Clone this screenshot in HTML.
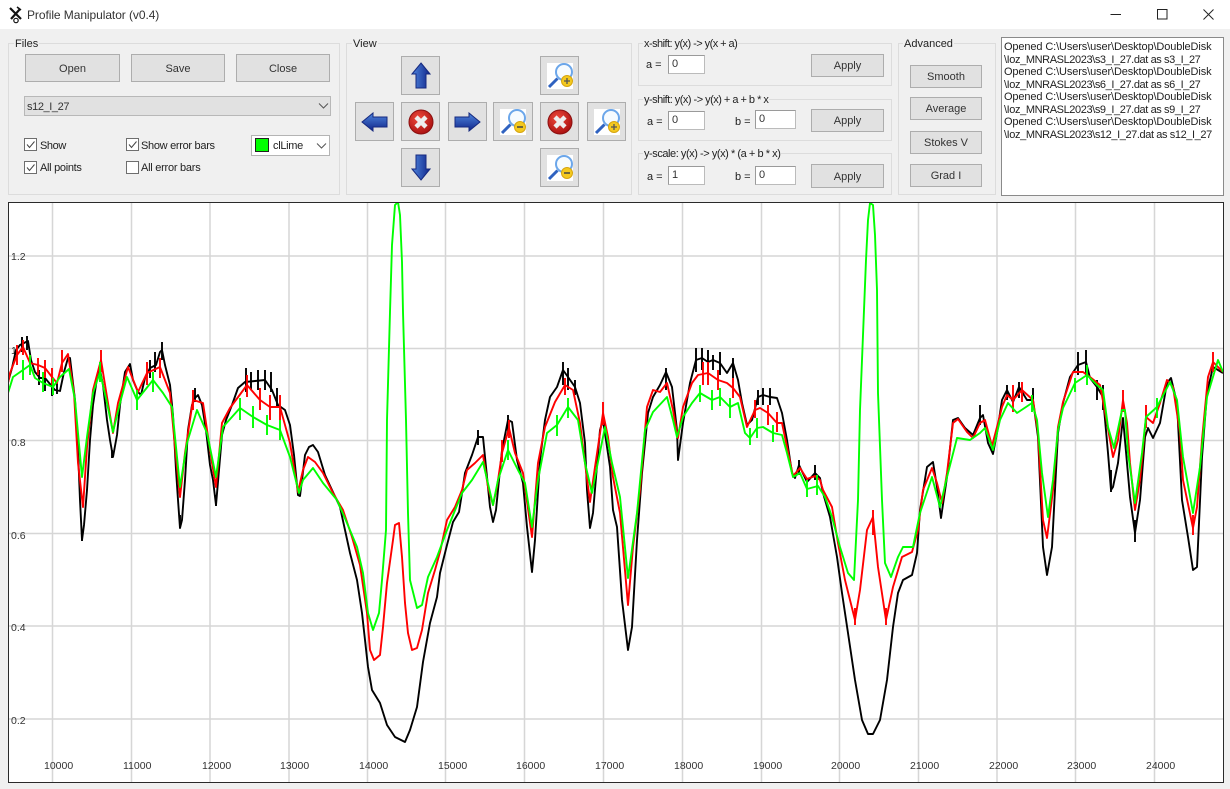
<!DOCTYPE html>
<html><head><meta charset="utf-8"><title>Profile Manipulator (v0.4)</title>
<style>
html,body{margin:0;padding:0;width:1230px;height:789px;overflow:hidden;background:#f0f0f0;font-family:"Liberation Sans",sans-serif;font-size:11px;color:#222}
body{filter:blur(.3px)}
div,svg.a{position:absolute;box-sizing:border-box}
.t{white-space:nowrap;line-height:14px;height:14px}
.g{border:1px solid #dcdcdc}
.l{background:#f0f0f0;padding:0 1px;white-space:nowrap;line-height:13px;height:13px}
.b{background:#e1e1e1;border:1px solid #adadad;border-width:1px 1.5px 1.5px 1px;text-align:center;color:#333}
.i{background:#fff;border:1px solid #8f8f8f;border-color:#9a9a9a #bbb #bbb #9a9a9a;padding:0 0 0 3px;line-height:16px;color:#333}
.c{background:#fff;border:1px solid #6e6e6e;width:13px;height:13px}
.m1{letter-spacing:-.12px}.m2{letter-spacing:-.4px}
</style></head><body>
<div style="left:0;top:0;width:1230px;height:29px;background:#fff"></div>
<svg class="a" style="left:8px;top:6px" width="16" height="18" viewBox="0 0 16 18"><path d="M2 2L13 13M12 3L3 13" stroke="#111" stroke-width="2.2" fill="none"/><path d="M9 1L13 4" stroke="#111" stroke-width="1.6"/><circle cx="8" cy="14.5" r="2.2" fill="#fff" stroke="#111" stroke-width="1.2"/></svg>
<div class="t" style="left:27px;top:8px;font-size:12px;color:#333;letter-spacing:-.07px">Profile Manipulator (v0.4)</div>
<svg class="a" style="left:1100px;top:0" width="130" height="29"><path d="M10.5 14.5H21" stroke="#222" stroke-width="1"/><rect x="57.5" y="9.5" width="9.5" height="9.5" fill="none" stroke="#222"/><path d="M103.5 9.5L113.500 19.500M113.500 9.500L103.500 19.500" stroke="#222" fill="none"/></svg>

<div class="g" style="left:8px;top:43px;width:332px;height:152px"></div>
<div class="l" style="left:14px;top:38px">Files</div>
<div class="b" style="left:25px;top:54px;width:95px;height:28px;line-height:28px">Open</div>
<div class="b" style="left:131px;top:54px;width:94px;height:28px;line-height:28px">Save</div>
<div class="b" style="left:236px;top:54px;width:94px;height:28px;line-height:28px">Close</div>
<div class="b" style="left:24px;top:96px;width:307px;height:20px;line-height:20px;text-align:left;padding-left:2px;border-color:#b8b8b8;letter-spacing:-.4px">s12_I_27</div>
<svg class="a" style="left:318px;top:102px" width="11" height="8"><path d="M1 1.500L5.500 6L10 1.500" fill="none" stroke="#555"/></svg>
<div class="c" style="left:24px;top:138px"></div><svg class="a" style="left:24px;top:138px" width="13" height="13"><path d="M3 6.500L5.500 9.500L10.500 3.500" fill="none" stroke="#444"/></svg>
<div class="t" style="left:40px;top:139px;letter-spacing:-.4px">Show</div>
<div class="c" style="left:126px;top:138px"></div><svg class="a" style="left:126px;top:138px" width="13" height="13"><path d="M3 6.500L5.500 9.500L10.500 3.500" fill="none" stroke="#444"/></svg>
<div class="t" style="left:141px;top:139px;letter-spacing:-.3px">Show error bars</div>
<div class="c" style="left:24px;top:161px"></div><svg class="a" style="left:24px;top:161px" width="13" height="13"><path d="M3 6.500L5.500 9.500L10.500 3.500" fill="none" stroke="#444"/></svg>
<div class="t" style="left:40px;top:161px;letter-spacing:-.3px">All points</div>
<div class="c" style="left:126px;top:161px"></div>
<div class="t" style="left:141px;top:161px;letter-spacing:-.25px">All error bars</div>
<div style="left:251px;top:135px;width:79px;height:21px;background:#fff;border:1px solid #b4b4b4"></div>
<div style="left:255px;top:138px;width:14px;height:14px;background:#0f0;border:1px solid #222"></div>
<div class="t" style="left:273px;top:139px;letter-spacing:-.3px">clLime</div>
<svg class="a" style="left:316px;top:142px" width="11" height="8"><path d="M1 1.500L5.500 6L10 1.500" fill="none" stroke="#555"/></svg>

<div class="g" style="left:346px;top:43px;width:286px;height:152px"></div>
<div class="l" style="left:352px;top:38px">View</div>
<svg width="0" height="0" style="position:absolute"><defs>
<linearGradient id="gh" x1="0" y1="0" x2="0" y2="1"><stop offset="0" stop-color="#4f86de"/><stop offset="1" stop-color="#10258a"/></linearGradient>
<linearGradient id="gv" x1="0" y1="0" x2="1" y2="0"><stop offset="0" stop-color="#4f86de"/><stop offset="1" stop-color="#10258a"/></linearGradient>
<radialGradient id="gr" cx=".4" cy=".35" r=".7"><stop offset="0" stop-color="#ee4a3c"/><stop offset="1" stop-color="#a80f0f"/></radialGradient>
<symbol id="x" viewBox="0 0 26 26"><circle cx="13" cy="13" r="12" fill="url(#gr)" stroke="#8a1010"/><path d="M8 8L18 18M18 8L8 18" stroke="#eee" stroke-width="4.500"/></symbol>
<symbol id="zp" viewBox="0 0 26 26"><rect width="26" height="26" fill="#fff"/><circle cx="17" cy="9" r="8" fill="#f6fbff" stroke="#6ba6ea" stroke-width="2"/><path d="M10.500 15.500L2 24" stroke="#2f62c0" stroke-width="3"/><circle cx="20" cy="18" r="5.500" fill="#f4c91e" stroke="#d6a510"/><path d="M17 18H23M20 15V21" stroke="#555" stroke-width="1.300"/></symbol>
<symbol id="zm" viewBox="0 0 26 26"><rect width="26" height="26" fill="#fff"/><circle cx="17" cy="9" r="8" fill="#f6fbff" stroke="#6ba6ea" stroke-width="2"/><path d="M10.500 15.500L2 24" stroke="#2f62c0" stroke-width="3"/><circle cx="20" cy="18" r="5.500" fill="#f4c91e" stroke="#d6a510"/><path d="M17 18H23" stroke="#444" stroke-width="1.500"/></symbol>
</defs></svg>
<div class="b" style="left:401px;top:56px;width:39px;height:39px"></div>
<svg class="a" style="left:411px;top:62px" width="20" height="27"><path d="M10 1L19 12H15V26H5V12H1Z" fill="url(#gv)" stroke="#16297f"/></svg>
<div class="b" style="left:355px;top:102px;width:39px;height:39px"></div>
<svg class="a" style="left:361px;top:112px" width="27" height="20"><path d="M1 10L12 1V5H26V15H12V19Z" fill="url(#gh)" stroke="#16297f"/></svg>
<div class="b" style="left:401px;top:102px;width:39px;height:39px"></div>
<svg class="a" style="left:408px;top:109px" width="26" height="26"><use href="#x"/></svg>
<div class="b" style="left:448px;top:102px;width:39px;height:39px"></div>
<svg class="a" style="left:454px;top:112px" width="27" height="20"><path d="M26 10L15 1V5H1V15H15V19Z" fill="url(#gh)" stroke="#16297f"/></svg>
<div class="b" style="left:401px;top:148px;width:39px;height:39px"></div>
<svg class="a" style="left:411px;top:154px" width="20" height="27"><path d="M10 26L19 15H15V1H5V15H1Z" fill="url(#gv)" stroke="#16297f"/></svg>
<div class="b" style="left:493px;top:102px;width:40px;height:39px"></div>
<svg class="a" style="left:500px;top:109px" width="26" height="26"><use href="#zm"/></svg>
<div class="b" style="left:540px;top:102px;width:39px;height:39px"></div>
<svg class="a" style="left:547px;top:109px" width="26" height="26"><use href="#x"/></svg>
<div class="b" style="left:587px;top:102px;width:39px;height:39px"></div>
<svg class="a" style="left:594px;top:109px" width="26" height="26"><use href="#zp"/></svg>
<div class="b" style="left:540px;top:56px;width:39px;height:39px"></div>
<svg class="a" style="left:547px;top:63px" width="26" height="26"><use href="#zp"/></svg>
<div class="b" style="left:540px;top:148px;width:39px;height:39px"></div>
<svg class="a" style="left:547px;top:155px" width="26" height="26"><use href="#zm"/></svg>

<div class="g" style="left:638px;top:43px;width:254px;height:43px"></div>
<div class="l" style="left:643px;top:38px;letter-spacing:-.55px">x-shift: y(x) -&gt; y(x + a)</div>
<div class="t" style="left:646px;top:58px">a =</div>
<div class="i" style="left:668px;top:55px;width:37px;height:19px">0</div>
<div class="b" style="left:811px;top:54px;width:73px;height:23px;line-height:23px">Apply</div>
<div class="g" style="left:638px;top:99px;width:254px;height:42px"></div>
<div class="l" style="left:643px;top:94px;letter-spacing:-.52px">y-shift: y(x) -&gt; y(x) + a + b * x</div>
<div class="t" style="left:647px;top:115px">a =</div>
<div class="i" style="left:668px;top:111px;width:37px;height:19px">0</div>
<div class="t" style="left:735px;top:115px">b =</div>
<div class="i" style="left:755px;top:110px;width:41px;height:19px">0</div>
<div class="b" style="left:811px;top:109px;width:73px;height:23px;line-height:23px">Apply</div>
<div class="g" style="left:638px;top:153px;width:254px;height:42px"></div>
<div class="l" style="left:643px;top:148px;letter-spacing:-.45px">y-scale: y(x) -&gt; y(x) * (a + b * x)</div>
<div class="t" style="left:647px;top:170px">a =</div>
<div class="i" style="left:668px;top:166px;width:37px;height:19px">1</div>
<div class="t" style="left:735px;top:170px">b =</div>
<div class="i" style="left:755px;top:166px;width:41px;height:19px">0</div>
<div class="b" style="left:811px;top:164px;width:73px;height:24px;line-height:24px">Apply</div>

<div class="g" style="left:898px;top:43px;width:98px;height:152px"></div>
<div class="l" style="left:903px;top:38px">Advanced</div>
<div class="b" style="left:910px;top:65px;width:72px;height:23px;line-height:23px">Smooth</div>
<div class="b" style="left:910px;top:97px;width:72px;height:23px;line-height:23px">Average</div>
<div class="b" style="left:910px;top:131px;width:72px;height:23px;line-height:23px">Stokes V</div>
<div class="b" style="left:910px;top:164px;width:72px;height:23px;line-height:23px">Grad I</div>

<div style="left:1001px;top:37px;width:223px;height:159px;background:#fff;border:1px solid #8a8a8a"></div>
<div class="t m1" style="left:1004px;top:40px">Opened C:\Users\user\Desktop\DoubleDisk</div>
<div class="t m2" style="left:1004px;top:53px">\Ioz_MNRASL2023\s3_I_27.dat as s3_I_27</div>
<div class="t m1" style="left:1004px;top:65px">Opened C:\Users\user\Desktop\DoubleDisk</div>
<div class="t m2" style="left:1004px;top:78px">\Ioz_MNRASL2023\s6_I_27.dat as s6_I_27</div>
<div class="t m1" style="left:1004px;top:90px">Opened C:\Users\user\Desktop\DoubleDisk</div>
<div class="t m2" style="left:1004px;top:103px">\Ioz_MNRASL2023\s9_I_27.dat as s9_I_27</div>
<div class="t m1" style="left:1004px;top:115px">Opened C:\Users\user\Desktop\DoubleDisk</div>
<div class="t m2" style="left:1004px;top:128px">\Ioz_MNRASL2023\s12_I_27.dat as s12_I_27</div>

<svg class="a" style="left:0;top:0" width="1230" height="789" viewBox="0 0 1230 789">
<defs><clipPath id="cp"><rect x="9" y="203" width="1214" height="579"/></clipPath></defs>
<rect x="8.500" y="202.500" width="1215" height="580" fill="#fff" stroke="#2a2a2a"/>
<g stroke="#d6d6d6" stroke-width="1.500" fill="none">
<path d="M52.500 203V782M131.500 203V782M210 203V782M289 203V782M367.500 203V782M445.500 203V782M524.500 203V782M603.500 203V782M682.500 203V782M761.500 203V782M839.500 203V782M918.500 203V782M997 203V782M1075.500 203V782M1154.500 203V782"/>
<path d="M9 256H1223M9 348.500H1223M9 440.500H1223M9 533.500H1223M9 626H1223M9 719H1223"/>
</g>
<g font-family="'Liberation Sans',sans-serif" font-size="10.500" fill="#333">
<text x="11" y="260">1.2</text><text x="11" y="354">1</text><text x="11" y="446">0.8</text><text x="11" y="539">0.6</text><text x="11" y="631">0.4</text><text x="11" y="724">0.2</text>
<text x="44" y="769">10000</text><text x="123" y="769">11000</text><text x="202" y="769">12000</text><text x="280" y="769">13000</text><text x="359" y="769">14000</text><text x="438" y="769">15000</text><text x="516" y="769">16000</text><text x="595" y="769">17000</text><text x="674" y="769">18000</text><text x="753" y="769">19000</text><text x="831" y="769">20000</text><text x="910" y="769">21000</text><text x="989" y="769">22000</text><text x="1067" y="769">23000</text><text x="1146" y="769">24000</text>
</g>
<g clip-path="url(#cp)" fill="none" stroke-width="1.900" stroke-linejoin="round">
<g stroke="#000">
<path d="M8 382L12 368L16 350L20 345L24 343L28 341L31 360L35 372L40 378L45 378L50 384L55 390L60 391L64 372L68 358L70 358L72 375L75 400L78 450L80 500L82 540L84 525L87 490L90 440L93 405L97 378L100 370L103 385L107 420L110 440L113 457L117 435L120 405L125 372L130 364L133 380L138 392L141 395L145 378L150 368L156 365L160 352L162 350L165 365L170 385L173 415L176 470L178 500L180 528L182 520L185 480L188 430L192 405L195 398L198 395L202 405L206 430L210 465L213 480L216 505L219 470L222 435L226 420L232 405L238 388L245 382L255 381L265 380L272 390L278 405L285 410L290 425L294 455L298 495L300 496L302 480L305 455L309 447L313 445L318 452L325 475L332 490L340 507L350 553L357 580L362 613L368 667L372 690L380 703L387 725L395 737L405 742L410 730L417 707L423 662L430 623L437 597L440 573L447 545L453 522L459 512L462 493L465 473L472 455L478 437L483 437L485 457L490 507L493 522L496 510L502 450L508 420L512 422L517 460L523 483L527 527L532 572L535 540L540 460L545 420L550 397L557 387L563 370L568 377L575 387L580 403L585 443L587 490L590 528L593 513L600 430L603 420L610 467L613 510L617 527L622 600L628 650L632 627L637 540L642 473L648 413L653 397L660 385L666 372L672 387L677 430L678 460L683 423L690 383L696 360L702 358L708 362L713 360L720 363L727 373L733 363L738 380L742 403L747 425L752 420L758 397L763 395L770 397L777 398L782 413L787 440L792 473L795 478L799 465L807 482L815 473L820 478L823 493L830 517L837 557L842 593L848 633L855 680L862 720L868 734L873 734L880 720L887 680L893 627L898 593L903 580L912 575L917 553L920 510L927 467L933 462L937 487L941 518L947 477L953 420L958 418L965 428L973 435L980 418L983 415L988 443L993 454L997 433L1002 400L1007 390L1013 402L1019 387L1027 400L1033 400L1038 437L1043 547L1047 575L1052 547L1058 433L1063 403L1070 377L1078 365L1086 362L1090 378L1097 387L1103 397L1108 453L1111 490L1113 487L1118 463L1123 418L1127 463L1130 497L1135 533L1140 500L1145 437L1148 428L1153 438L1160 423L1167 383L1171 378L1177 403L1182 500L1188 537L1193 570L1197 567L1202 457L1207 393L1213 367L1223 373"/>
<path d="M22 337V352M27 336V350M39 370V385M45 372V391M52 378V396M57 383V394M150 360V378M155 352V372M162 342V360M112 450V458M246 368V392M251 372V390M258 370V390M265 370V390M271 372V392M277 388V408M195 388V402M82 530V541M216 495V506M180 515V528M696 348V372M702 348V370M708 350V372M713 355V370M720 352V375M733 358V378M758 390V405M763 388V405M770 388V405M799 460V475M815 465V480M1078 352V375M1086 350V375M1097 380V400M1103 385V410M1111 470V492M1135 520V542M1007 385V400M1019 382V398M1033 388V405M980 405V425M563 362V385M568 368V390M575 380V395M508 415V432M478 430V445M666 368V390"/>
</g>
<g stroke="#f00">
<path d="M8 383L10 373L17 355L23 347L30 363L38 365L45 368L52 377L57 383L62 363L68 354L74 393L78 463L83 507L87 447L93 390L101 360L107 397L113 433L118 403L128 367L138 392L147 373L160 367L170 393L175 447L180 497L185 453L193 400L203 403L212 463L216 487L222 423L230 408L247 385L260 400L270 407L280 407L290 443L298 492L303 470L308 457L315 462L323 473L333 493L343 510L352 537L360 565L367 613L370 650L374 660L380 655L383 627L387 583L393 540L395 525L399 523L402 557L405 603L408 633L412 650L417 648L422 630L428 593L435 570L440 552L447 520L455 507L462 490L467 470L475 463L483 455L488 487L493 505L497 487L502 453L509 428L515 453L523 473L532 537L538 463L545 427L555 402L565 385L573 390L580 423L585 463L590 502L595 467L603 413L608 437L613 477L620 513L628 605L633 547L640 490L647 407L653 390L660 392L667 383L673 410L678 438L683 407L692 383L698 375L708 373L718 380L727 383L733 388L740 397L747 427L755 410L760 408L768 413L777 423L782 423L787 447L793 476L800 468L807 479L815 476L820 480L823 490L832 507L838 543L845 580L855 620L860 590L867 530L873 517L878 567L886 620L893 587L902 557L912 552L918 530L923 490L932 468L937 483L942 503L947 473L953 423L958 419L967 432L973 438L980 423L985 420L992 446L997 427L1002 407L1007 395L1013 400L1022 390L1033 400L1038 433L1043 520L1047 538L1053 490L1058 427L1063 402L1073 372L1083 372L1090 377L1100 385L1107 423L1113 457L1118 440L1123 400L1127 423L1130 463L1135 510L1140 480L1146 417L1153 423L1160 403L1167 380L1173 387L1180 433L1183 480L1193 528L1197 507L1202 440L1208 377L1213 362L1223 372"/>
<path d="M17 345V365M23 340V355M30 355V372M38 358V375M45 360V378M52 368V385M62 350V372M101 350V372M147 362V385M160 358V378M193 390V410M247 375V397M260 388V410M270 395V420M280 395V420M565 378V395M502 440V462M509 420V438M603 402V425M703 362V385M708 362V385M718 370V390M733 378V398M755 400V418M768 405V425M777 412V432M1013 385V412M1022 382V402M1123 390V412M1193 515V535M1213 352V372M873 510V535M855 608V625M886 608V625M1146 405V428"/>
</g>
<g stroke="#0f0">
<path d="M8 393L13 377L23 370L30 365L35 378L43 383L53 387L60 377L69 369L75 400L82 477L87 437L93 393L100 372L107 403L113 432L120 403L127 377L137 400L153 380L163 393L172 407L180 487L187 443L197 410L207 433L216 477L223 427L240 408L253 417L267 425L280 430L290 457L299 493L303 480L313 468L323 483L337 500L347 523L357 547L363 573L368 613L373 630L379 613L382 580L386 530L387 420L390 312L392 245L395 205L398 202L400 215L402 262L403 312L406 420L408 513L410 580L417 608L422 605L428 577L437 557L447 530L458 503L462 493L472 480L483 462L493 505L498 480L508 450L518 470L525 483L532 527L538 480L547 433L557 425L568 407L578 420L585 463L592 493L597 467L605 427L612 463L620 497L628 578L637 513L645 430L653 412L667 397L673 420L677 437L683 417L692 403L700 393L712 400L720 397L730 407L738 403L745 433L750 438L757 428L763 427L773 433L782 435L787 453L793 477L800 473L807 489L818 486L825 497L832 517L840 547L848 573L854 580L858 500L860 410L862 360L866 260L868 220L870 203L873 205L875 235L877 290L878 393L882 500L885 563L891 577L898 557L903 547L913 547L920 513L932 477L940 507L947 477L957 438L970 440L980 433L985 428L993 450L1000 420L1008 403L1017 413L1032 403L1037 420L1042 473L1048 517L1053 480L1058 430L1063 408L1075 383L1087 375L1097 385L1103 390L1108 427L1114 448L1122 410L1125 410L1128 453L1135 503L1142 453L1146 417L1157 407L1170 382L1177 400L1183 457L1193 513L1200 467L1207 397L1218 360L1223 372"/>
<path d="M23 360V380M30 355V375M43 372V392M53 378V395M100 362V382M137 390V410M153 372V392M240 398V420M253 406V428M267 415V435M280 420V440M557 415V436M508 440V460M568 398V418M700 385V402M712 390V410M720 388V406M730 398V418M757 418V438M750 428V445M773 425V442M807 480V497M817 475V495M1032 395V412M1075 378V392M1087 365V385M1157 398V418"/>
</g>
</g>
</svg>
</body></html>
